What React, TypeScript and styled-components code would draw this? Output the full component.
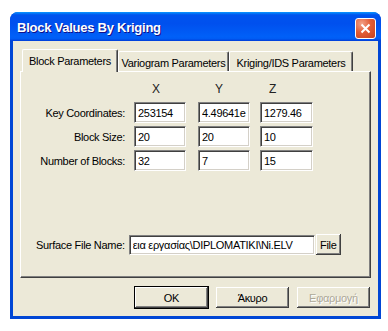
import { Fragment } from 'react';
import { createGlobalStyle } from 'styled-components';
import styled from 'styled-components';

const GlobalStyle = createGlobalStyle`
  body {
    margin: 0;
    background: #fff;
    font-family: 'Liberation Sans', Arial, sans-serif;
    font-size: 11px;
    letter-spacing: -0.3px;
    color: #000;
  }
`;

const Window = styled.div`
  display: flex;
  flex-direction: column;
  width: 371px;
  height: 307px;
  margin: 12px 0 0 10px;
  background: #0046d5;
  border-radius: 8px 8px 0 0;
  overflow: hidden;
`;
const TitleBar = styled.div`
  display: flex;
  align-items: center;
  justify-content: space-between;
  height: 29px;
  padding: 0 5px 0 7px;
  background: linear-gradient(
    to bottom,
    #0997ff 0%,
    #0053ee 10%,
    #0050ee 40%,
    #0060f8 85%,
    #005cf4 92%,
    #003dd7 100%
  );
`;
const Title = styled.div`
  color: #fff;
  font-weight: 700;
  font-size: 13px;
  letter-spacing: -0.25px;
  text-shadow: 1px 1px #0f1089;
  margin-top: 2px;
`;
const CloseBtn = styled.div`
  display: flex;
  align-items: center;
  justify-content: center;
  width: 19px;
  height: 19px;
  margin-top: 3px;
  border: 1px solid #fff;
  border-radius: 3px;
  background: radial-gradient(circle at 30% 25%, #f2a389 0%, #e35d36 45%, #c4411f 100%);
`;
const Body = styled.div`
  display: flex;
  flex-direction: column;
  flex: 1;
  margin: 0 3px 3px;
  padding: 8px 7px 0;
  background: #ece9d8;
`;
const TabStrip = styled.div`
  display: flex;
  align-items: flex-end;
  height: 22px;
  padding-left: 2px;
  position: relative;
  z-index: 1;
`;
const Tab = styled.div<{ $w: number; $active?: boolean }>`
  display: flex;
  align-items: center;
  justify-content: center;
  box-sizing: border-box;
  width: ${(p) => p.$w}px;
  height: ${(p) => (p.$active ? 23 : 20)}px;
  margin-bottom: ${(p) => (p.$active ? -1 : 0)}px;
  padding-top: ${(p) => (p.$active ? 0 : 2)}px;
  background: #ece9d8;
  border-top: 1px solid #fff;
  border-left: 1px solid #fff;
  border-right: 1px solid #404040;
  border-radius: 2px 2px 0 0;
  box-shadow: inset -1px 0 #808080;
`;
const Panel = styled.div`
  box-sizing: border-box;
  height: 207px;
  padding: 10px 0 0 1px;
  border-top: 1px solid #fff;
  border-left: 1px solid #fff;
  border-right: 1px solid #404040;
  border-bottom: 1px solid #404040;
  box-shadow: inset -1px -1px #808080;
`;
const CoordGrid = styled.div`
  display: grid;
  grid-template-columns: 112px 64px 62px 53px;
  grid-template-rows: 17px 21px 21px 21px;
  row-gap: 3px;
  align-items: center;
`;
const AxisHead = styled.div<{ $off: number }>`
  align-self: start;
  padding-left: ${(p) => p.$off}px;
  font-size: 12px;
  color: #222;
`;
const FieldLabel = styled.div`
  text-align: right;
  padding-right: 9px;
`;
const Edit = styled.input<{ $w?: number; $h?: number }>`
  box-sizing: border-box;
  width: ${(p) => p.$w ?? 52}px;
  height: ${(p) => p.$h ?? 21}px;
  margin: 0;
  padding: 0 0 0 3px;
  font: inherit;
  letter-spacing: -0.3px;
  color: #000;
  background: #fff;
  border: 1px solid;
  border-color: #808080 #fff #fff #808080;
  box-shadow: inset 1px 1px #404040, inset -1px -1px #d4d0c8;
  outline: none;
`;
const SurfaceRow = styled.div`
  display: flex;
  align-items: center;
  margin-top: 62px;
  padding-left: 14px;
`;
const SurfaceLabel = styled.span`
  margin-right: 4px;
`;
const Button = styled.div<{ $w: number; $default?: boolean; $disabled?: boolean }>`
  display: flex;
  align-items: center;
  justify-content: center;
  box-sizing: border-box;
  width: ${(p) => p.$w}px;
  height: 23px;
  background: #ece9d8;
  color: ${(p) => (p.$disabled ? '#aca899' : '#000')};
  text-shadow: ${(p) => (p.$disabled ? '1px 1px #fff' : 'none')};
  border: 1px solid ${(p) => (p.$default ? '#000' : 'transparent')};
  box-shadow: inset -1px -1px #404040, inset 1px 1px #fff, inset -2px -2px #808080,
    inset 2px 2px #ece9d8;
`;
const ButtonRow = styled.div`
  display: flex;
  justify-content: flex-end;
  gap: 6px;
  margin-top: 8px;
`;

const rows = [
  { label: 'Key Coordinates:', values: ['253154', '4.49641e', '1279.46'] },
  { label: 'Block Size:', values: ['20', '20', '10'] },
  { label: 'Number of Blocks:', values: ['32', '7', '15'] }
];

export default function App() {
  return (
    <>
      <GlobalStyle />
      <Window>
        <TitleBar>
          <Title>Block Values By Kriging</Title>
          <CloseBtn>
            <svg width='11' height='11' viewBox='0 0 11 11'>
              <path d='M1.5 1.5 L9.5 9.5 M9.5 1.5 L1.5 9.5' stroke='#fff' strokeWidth='2' />
            </svg>
          </CloseBtn>
        </TitleBar>
        <Body>
          <TabStrip>
            <Tab $w={96} $active>
              Block Parameters
            </Tab>
            <Tab $w={111}>Variogram Parameters</Tab>
            <Tab $w={124}>Kriging/IDS Parameters</Tab>
          </TabStrip>
          <Panel>
            <CoordGrid>
              <span />
              <AxisHead $off={18}>X</AxisHead>
              <AxisHead $off={17}>Y</AxisHead>
              <AxisHead $off={9}>Z</AxisHead>
              {rows.map((r) => (
                <Fragment key={r.label}>
                  <FieldLabel>{r.label}</FieldLabel>
                  {r.values.map((v, i) => (
                    <Edit key={i} $w={i === 2 ? 53 : 52} defaultValue={v} />
                  ))}
                </Fragment>
              ))}
            </CoordGrid>
            <SurfaceRow>
              <SurfaceLabel>Surface File Name:</SurfaceLabel>
              <Edit $w={186} $h={20} defaultValue='εια εργασίας\DIPLOMATIKI\Ni.ELV' />
              <Button $w={27}>File</Button>
            </SurfaceRow>
          </Panel>
          <ButtonRow>
            <Button $w={75} $default>
              OK
            </Button>
            <Button $w={75}>Άκυρο</Button>
            <Button $w={75} $disabled>
              Εφαρμογή
            </Button>
          </ButtonRow>
        </Body>
      </Window>
    </>
  );
}
